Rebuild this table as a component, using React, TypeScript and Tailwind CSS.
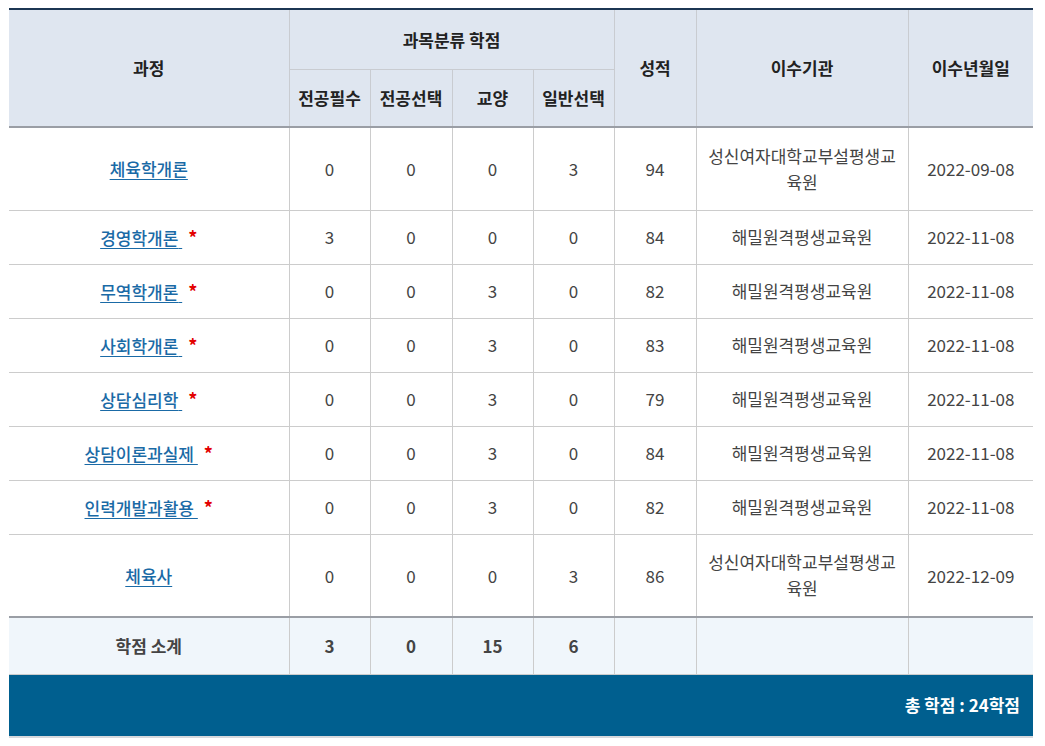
import React from "react";

const rows = [
  { name: "체육학개론", star: false, a: 0, b: 0, c: 0, d: 3, score: 94, org: "성신여자대학교부설평생교육원", date: "2022-09-08", tall: true },
  { name: "경영학개론", star: true, a: 3, b: 0, c: 0, d: 0, score: 84, org: "해밀원격평생교육원", date: "2022-11-08" },
  { name: "무역학개론", star: true, a: 0, b: 0, c: 3, d: 0, score: 82, org: "해밀원격평생교육원", date: "2022-11-08" },
  { name: "사회학개론", star: true, a: 0, b: 0, c: 3, d: 0, score: 83, org: "해밀원격평생교육원", date: "2022-11-08" },
  { name: "상담심리학", star: true, a: 0, b: 0, c: 3, d: 0, score: 79, org: "해밀원격평생교육원", date: "2022-11-08" },
  { name: "상담이론과실제", star: true, a: 0, b: 0, c: 3, d: 0, score: 84, org: "해밀원격평생교육원", date: "2022-11-08" },
  { name: "인력개발과활용", star: true, a: 0, b: 0, c: 3, d: 0, score: 82, org: "해밀원격평생교육원", date: "2022-11-08" },
  { name: "체육사", star: false, a: 0, b: 0, c: 0, d: 3, score: 86, org: "성신여자대학교부설평생교육원", date: "2022-12-09", tall: true },
];

const th = "border border-[#c9ccd1] font-bold text-[17px] text-[#222] text-center align-middle";
const td = "border border-[#cccccc] text-[17px] text-[#444] text-center align-middle";

export default function App() {
  return (
    <div
      className="bg-white w-[1045px] h-[746px] pt-[8px] pl-[9px]"
      style={{ fontFamily: '"Noto Sans CJK KR", "Noto Sans", sans-serif' }}
    >
      <div className="w-[1024px]">
        <table className="w-[1024px] border-collapse table-fixed border-t-2 border-t-[#1c3653]">
          <colgroup>
            <col className="w-[280px]" />
            <col className="w-[81px]" />
            <col className="w-[82px]" />
            <col className="w-[81px]" />
            <col className="w-[81px]" />
            <col className="w-[82px]" />
            <col className="w-[212px]" />
            <col className="w-[125px]" />
          </colgroup>
          <thead className="bg-[#dfe6f0]">
            <tr className="h-[60px]">
              <th rowSpan={2} className={th + " border-l-0"}>과정</th>
              <th colSpan={4} className={th}>과목분류 학점</th>
              <th rowSpan={2} className={th}>성적</th>
              <th rowSpan={2} className={th}>이수기관</th>
              <th rowSpan={2} className={th + " border-r-0"}>이수년월일</th>
            </tr>
            <tr className="h-[58px] border-b-2 border-b-[#9a9ea5]">
              <th className={th}>전공필수</th>
              <th className={th}>전공선택</th>
              <th className={th}>교양</th>
              <th className={th}>일반선택</th>
            </tr>
          </thead>
          <tbody>
            {rows.map((r, i) => (
              <tr key={i} className={r.tall ? "h-[83px]" : "h-[54px]"}>
                <td className={td + " border-l-0"}>
                  <a href="#" className="text-[#1a6aa6] font-medium underline underline-offset-[3px]">
                    {r.name}
                    {r.star ? " " : ""}
                  </a>
                  {r.star && <span className="text-[#e30000] font-bold text-[18px] ml-[6px]">*</span>}
                </td>
                <td className={td}>{r.a}</td>
                <td className={td}>{r.b}</td>
                <td className={td}>{r.c}</td>
                <td className={td}>{r.d}</td>
                <td className={td}>{r.score}</td>
                <td className={td + " leading-[26px] px-[8px]"}>{r.org}</td>
                <td className={td + " border-r-0"}>{r.date}</td>
              </tr>
            ))}
            <tr className="h-[57px] bg-[#f0f6fb] border-t-2 border-t-[#9a9ea5]">
              <td className={td + " border-l-0 font-bold text-[#222]"}>학점 소계</td>
              <td className={td + " font-bold text-[#222]"}>3</td>
              <td className={td + " font-bold text-[#222]"}>0</td>
              <td className={td + " font-bold text-[#222]"}>15</td>
              <td className={td + " font-bold text-[#222]"}>6</td>
              <td className={td}></td>
              <td className={td}></td>
              <td className={td + " border-r-0"}></td>
            </tr>
          </tbody>
        </table>
        <div className="h-[63px] bg-[#005f8f] flex items-center justify-end pr-[13px] border-b-2 border-b-[#d6d9dd]">
          <span className="text-white font-bold text-[17px]">총 학점 : 24학점</span>
        </div>
      </div>
    </div>
  );
}
